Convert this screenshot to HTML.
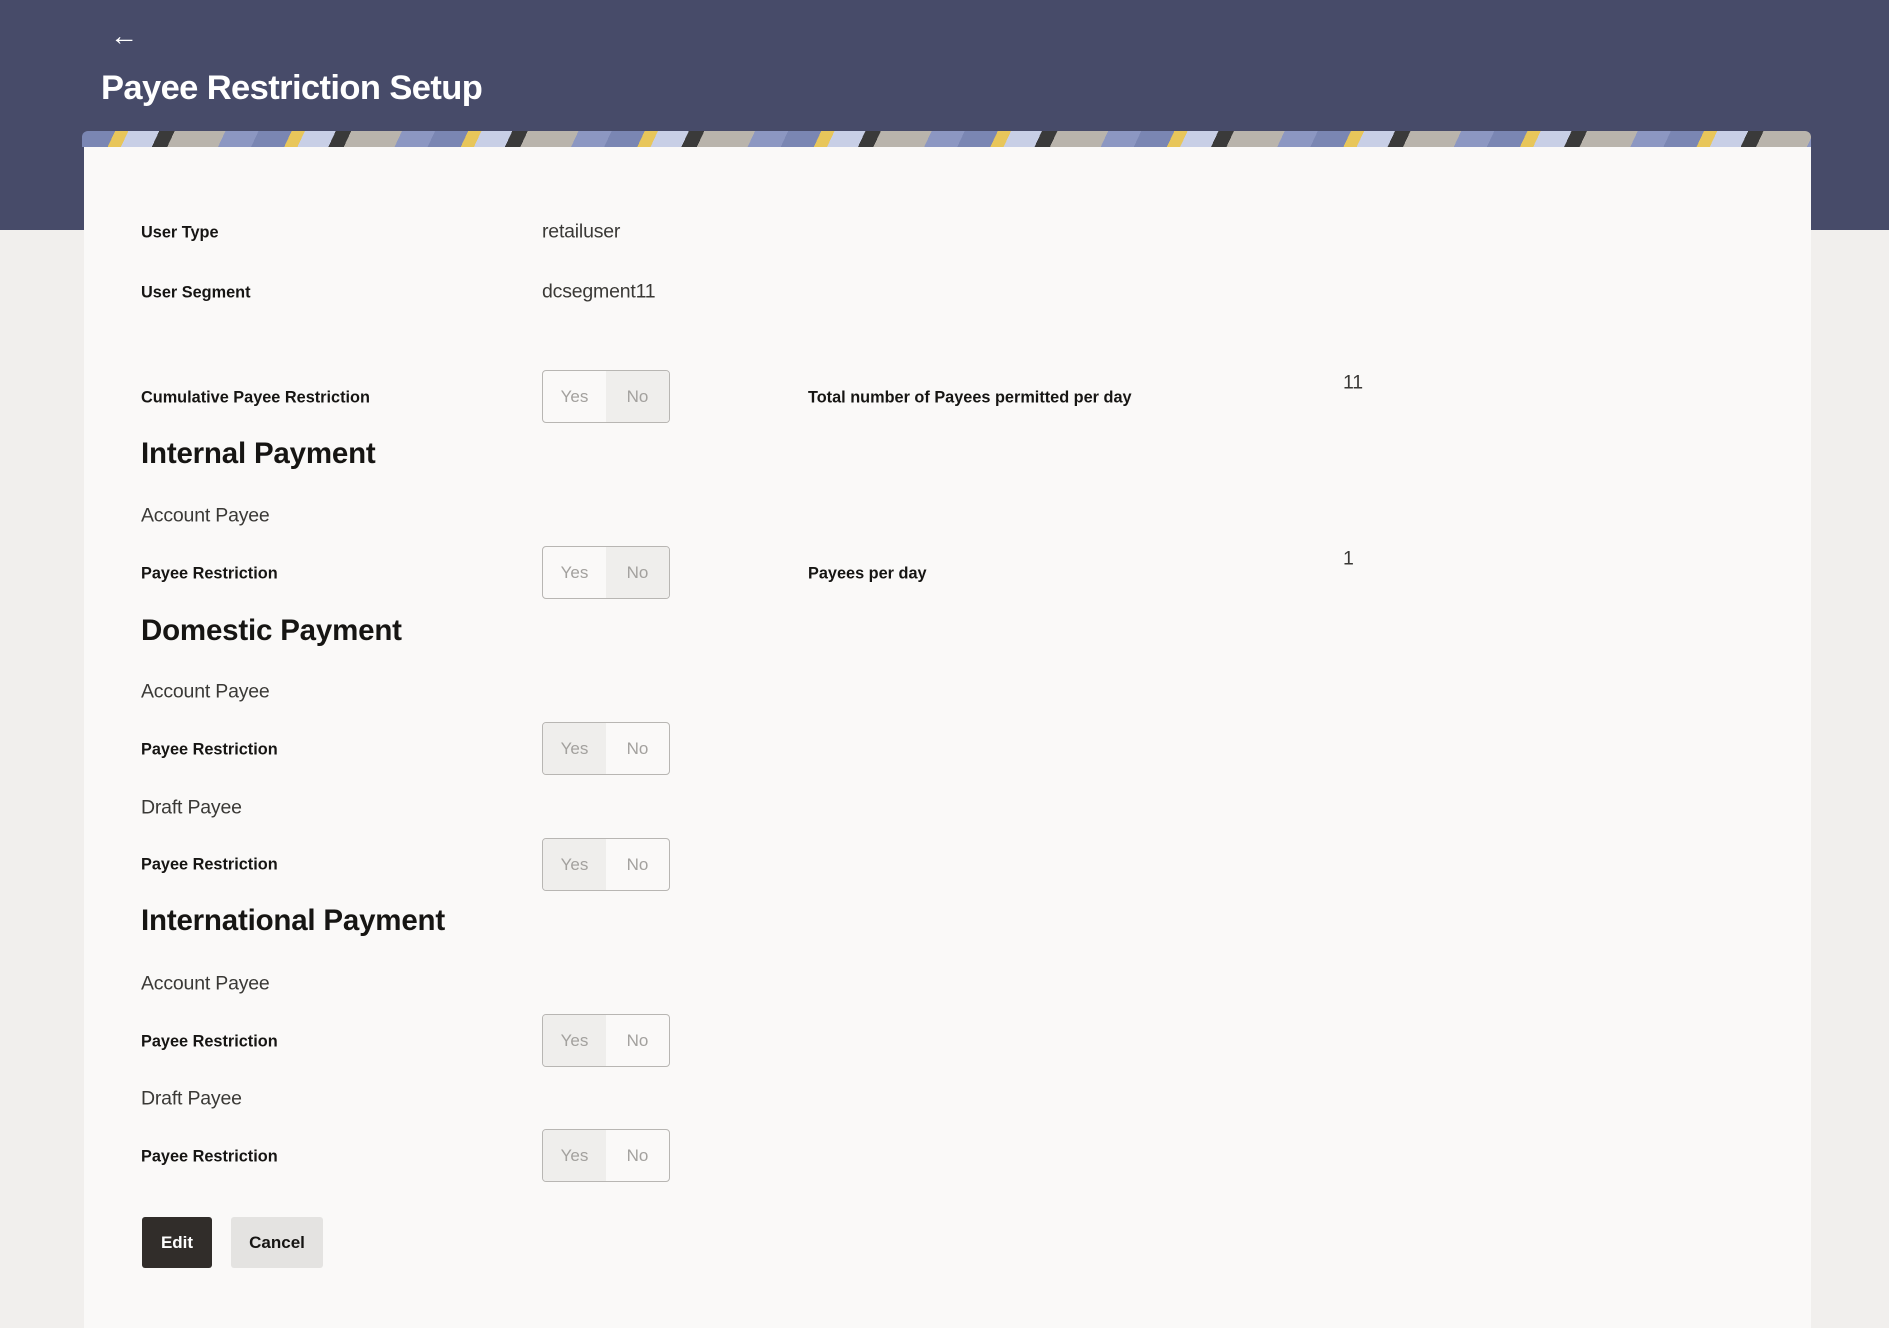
<!DOCTYPE html>
<html><head><meta charset="utf-8"><style>
*{margin:0;padding:0;box-sizing:border-box}
body{width:1889px;height:1328px;overflow:hidden;background:#f1efed;font-family:"Liberation Sans",sans-serif;color:#161513;position:relative}
.hdr{position:absolute;left:0;top:0;width:1889px;height:230px;background:#474b69}
.back{position:absolute;left:110px;top:20px;color:#fff;font-size:28px}
h1{position:absolute;left:101px;top:69px;color:#fff;font-size:34.5px;font-weight:bold;letter-spacing:-0.6px}
.strip{position:absolute;left:82px;top:131px;width:1729px;height:16px;border-radius:6px 6px 0 0;background:repeating-linear-gradient(115deg,#7a86b3 0 30px,#e8c65a 30px 42px,#c8cfe6 42px 70px,#3a3a3a 70px 84px,#b9b4ac 84px 130px,#8c97c2 130px 160px)}
.card{position:absolute;left:84px;top:146px;width:1727px;height:1182px;background:#faf9f8}
.a{position:absolute;transform:translateY(-50%);white-space:nowrap}
.lb{font-size:16.3px;font-weight:bold;margin-top:1px}
.pl{font-size:19.5px;color:#3a3936;margin-top:1px;letter-spacing:-0.2px}
.h{font-size:29.5px;font-weight:bold;margin-top:1px;letter-spacing:-0.2px}
.tg{position:absolute;width:128px;height:53px;border:1px solid #b8b6b3;border-radius:4px;display:flex;overflow:hidden;font-size:17px;color:#a3a19e}
.tg span{flex:1;display:flex;align-items:center;justify-content:center}
.tg .s{background:#efeeec}
.btn{position:absolute;top:1217px;height:51px;border-radius:3px;display:flex;align-items:center;justify-content:center;font-size:17px;font-weight:bold}
</style></head><body>
<div class="hdr"></div>
<div class="back">&#8592;</div>
<h1>Payee Restriction Setup</h1>
<div class="card"></div>
<div class="strip"></div>

<div class="a lb" style="left:141px;top:232px">User Type</div>
<div class="a pl" style="left:542px;top:231px">retailuser</div>
<div class="a lb" style="left:141px;top:292px">User Segment</div>
<div class="a pl" style="left:542px;top:291px">dcsegment11</div>

<div class="a lb" style="left:141px;top:397px">Cumulative Payee Restriction</div>
<div class="tg" style="left:542px;top:370px"><span>Yes</span><span class="s">No</span></div>
<div class="a lb" style="left:808px;top:397px">Total number of Payees permitted per day</div>
<div class="a pl" style="left:1343px;top:382px">11</div>

<div class="a h" style="left:141px;top:453px">Internal Payment</div>
<div class="a pl" style="left:141px;top:515px">Account Payee</div>
<div class="a lb" style="left:141px;top:573px">Payee Restriction</div>
<div class="tg" style="left:542px;top:546px"><span>Yes</span><span class="s">No</span></div>
<div class="a lb" style="left:808px;top:573px">Payees per day</div>
<div class="a pl" style="left:1343px;top:558px">1</div>

<div class="a h" style="left:141px;top:630px">Domestic Payment</div>
<div class="a pl" style="left:141px;top:691px">Account Payee</div>
<div class="a lb" style="left:141px;top:749px">Payee Restriction</div>
<div class="tg" style="left:542px;top:722px"><span class="s">Yes</span><span>No</span></div>
<div class="a pl" style="left:141px;top:807px">Draft Payee</div>
<div class="a lb" style="left:141px;top:864px">Payee Restriction</div>
<div class="tg" style="left:542px;top:838px"><span class="s">Yes</span><span>No</span></div>

<div class="a h" style="left:141px;top:920px">International Payment</div>
<div class="a pl" style="left:141px;top:983px">Account Payee</div>
<div class="a lb" style="left:141px;top:1041px">Payee Restriction</div>
<div class="tg" style="left:542px;top:1014px"><span class="s">Yes</span><span>No</span></div>
<div class="a pl" style="left:141px;top:1098px">Draft Payee</div>
<div class="a lb" style="left:141px;top:1156px">Payee Restriction</div>
<div class="tg" style="left:542px;top:1129px"><span class="s">Yes</span><span>No</span></div>

<div class="btn" style="left:142px;width:70px;background:#312d2a;color:#fff">Edit</div>
<div class="btn" style="left:231px;width:92px;background:#e4e3e1;color:#161513">Cancel</div>
</body></html>
